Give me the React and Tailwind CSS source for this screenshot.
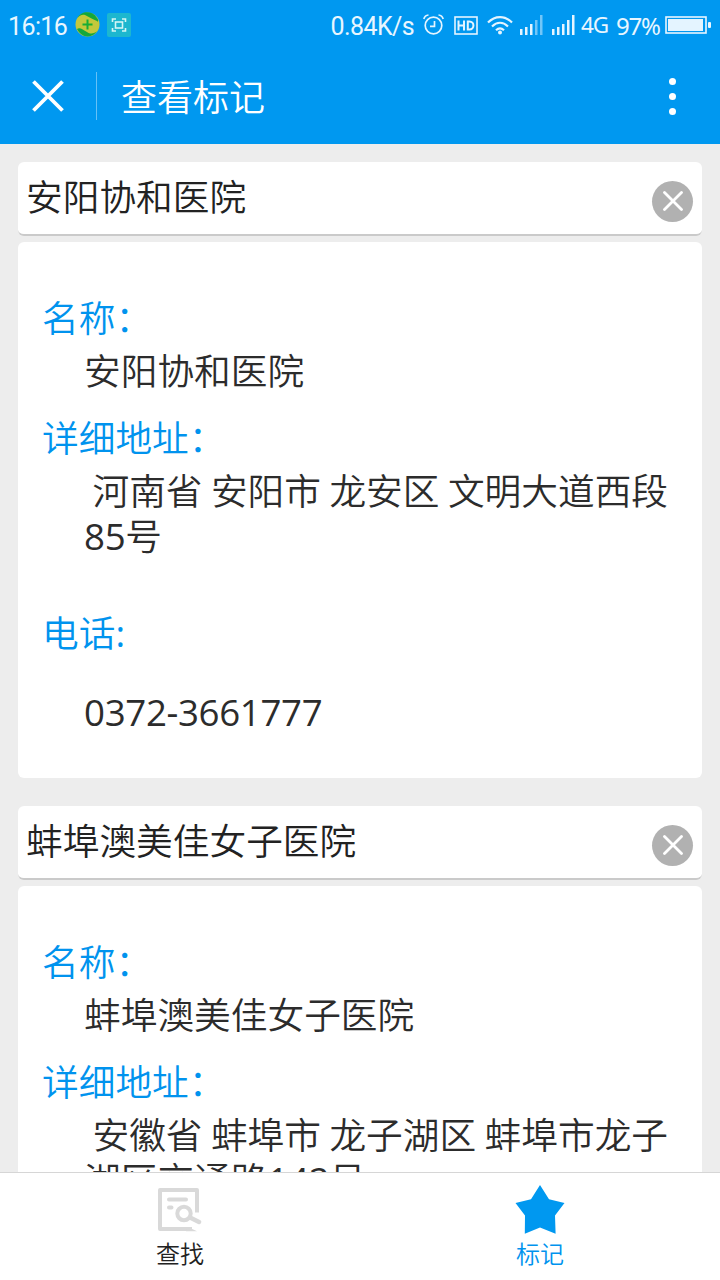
import React from "react";

const hospitals = [
  {
    name: "安阳协和医院",
    address: " 河南省 安阳市 龙安区 文明大道西段85号",
    phone: "0372-3661777",
  },
  {
    name: "蚌埠澳美佳女子医院",
    address: " 安徽省 蚌埠市 龙子湖区 蚌埠市龙子湖区交通路142号",
    phone: "",
  },
];

const Signal = ({ weak, className }) => (
  <svg className={className} width="23" height="20" viewBox="0 0 23 20" fill="#e4f4ff">
    <rect x="0" y="14" width="2.5" height="6" />
    <rect x="5" y="12" width="2.5" height="8" />
    <rect x="10" y="9" width="2.5" height="11" />
    <rect x="15" y="5" width="2.5" height="15" opacity={weak ? 0.5 : 1} />
    <rect x="20" y="0" width="2.5" height="20" opacity={weak ? 0.5 : 1} />
  </svg>
);

const StatusBar = () => (
  <div className="flex h-12 items-center pl-2 pr-[9px] pt-1 font-['Roboto','Noto_Sans',sans-serif] text-[25px] leading-none text-[#e8f6ff]">
    <span className="mt-px w-[67px] whitespace-nowrap text-[25px] tracking-[-0.6px]">16:16</span>
    <svg className="-mt-1 h-[25px] w-[25px]" viewBox="0 0 25 25">
      <circle cx="12.5" cy="12.5" r="12" fill="#c3c83c" />
      <path d="M2.5 6 C6 -1 17 -2 22 6 C24 8 23 11 22 9 C17 7 14 5 10 3 C7 2 4 4 2.5 6Z" fill="#14a83b" />
      <path d="M2 17 C5 15 8 18 12 20 C16 23 20 21 22 19 C18 26 7 27 2 17Z" fill="#14a83b" />
      <path d="M12.5 7.5v10M7.5 12.5h10" stroke="#17ad35" strokeWidth="2" />
    </svg>
    <svg className="-mt-0.5 ml-[7px] h-6 w-6" viewBox="0 0 24 24" fill="none" stroke="#d3f6f5" strokeWidth="1.6">
      <rect width="24" height="24" rx="2" fill="#1cb7cf" stroke="none" />
      <path d="M5.5 9V6h3.5M15 6h3.5v3M18.5 15v3H15M9 18H5.5v-3" />
      <rect x="8.5" y="9" width="7" height="6" />
    </svg>

    <div className="ml-auto flex items-center">
      <span className="mt-px whitespace-nowrap text-[25px] tracking-[-0.6px]">0.84K/s</span>
      <svg className="-mt-1 ml-[9px]" width="21" height="21" viewBox="0 0 21 21" fill="none" stroke="#e4f4ff" strokeWidth="1.7">
        <circle cx="10.5" cy="11.5" r="8.3" />
        <path d="M11.5 7v5.3H7M.8 5C1.5 2.5 3 1.2 5.5 1M20.2 5C19.5 2.5 18 1.2 15.5 1" />
      </svg>
      <svg className="-mt-0.5 ml-[10px]" width="24" height="19" viewBox="0 0 24 19" fill="none" stroke="#e4f4ff">
        <rect x="1" y="1" width="22" height="17" strokeWidth="1.6" />
        <path d="M4.5 4.5v10M10 4.5v10M4.5 9.5H10M13.8 4.5v10M13.8 5.5h1.5c5.5 0 5.5 8 0 8h-1.5" strokeWidth="2" />
      </svg>
      <svg className="-mt-0.5 ml-[9px]" width="26" height="20" viewBox="0 0 26 20" fill="none" stroke="#e4f4ff" strokeWidth="2.2">
        <path d="M1 7.5C8 .2 18 .2 25 7.5M5 11.5c5-4.8 11-4.8 16 0M9 15.3c2.5-2.3 5.5-2.3 8 0" />
        <circle cx="13" cy="17.5" r="2" fill="#e4f4ff" stroke="none" />
      </svg>
      <Signal weak className="-mt-0.5 ml-[7px]" />
      <Signal className="-mt-0.5 ml-[9px]" />
      <span className="-mt-px ml-[6px] w-[27px] whitespace-nowrap font-['Noto_Sans'] text-[22.5px] tracking-[-1px]">4G</span>
      <span className="ml-[8px] w-[43px] whitespace-nowrap font-['Noto_Sans'] text-[24px] tracking-[-1.2px]">97%</span>
      <svg className="-mt-0.5 ml-[6px]" width="46" height="18" viewBox="0 0 46 18" fill="none">
        <rect x="1" y="1" width="40" height="16" stroke="#e8f6ff" strokeWidth="1.6" />
        <rect x="3" y="3" width="35" height="12" fill="#e4f4ff" />
        <rect x="43" y="6" width="3" height="6" rx="1" fill="#e8f6ff" />
      </svg>
    </div>
  </div>
);

const Header = () => (
  <div className="flex h-24 items-center">
    <svg className="ml-8" width="32" height="32" viewBox="0 0 32 32" stroke="#fff" strokeWidth="3.8">
      <path d="M1.5 1.5l29 29M30.5 1.5l-29 29" />
    </svg>
    <div className="ml-8 h-12 w-px bg-[#66c1f7]" />
    <h1 className="ml-6 mt-[3px] text-[36px] font-[350] leading-[46px] text-white">查看标记</h1>
    <div className="ml-auto mr-[44px] flex flex-col gap-2">
      <span className="h-[7px] w-[7px] rounded-full bg-white" />
      <span className="h-[7px] w-[7px] rounded-full bg-white" />
      <span className="h-[7px] w-[7px] rounded-full bg-white" />
    </div>
  </div>
);

// House numbers need a heavier weight than the characters around them
const Address = ({ text }) =>
  text.split(/(\d+)/).map((part, i) =>
    /\d/.test(part) ? (
      <span key={i} className="font-normal tracking-[-0.35px]">{part}</span>
    ) : (
      part
    )
  );

const HospitalCard = ({ hospital }) => (
  <section className="mb-7">
    {/* Title row with remove button */}
    <div className="flex h-[74px] items-center justify-between rounded-md border-b-2 border-[#cacaca] bg-white pl-2 pr-[9px]">
      <h2 className="-mt-0.5 text-[36.7px] font-[350] leading-[46px] text-[#222]">{hospital.name}</h2>
      <button className="mt-1.5 flex h-[41px] w-[41px] items-center justify-center rounded-full bg-[#b1b1b1]">
        <svg width="20" height="20" viewBox="0 0 20 20" stroke="#fff" strokeWidth="2.8" strokeLinecap="round">
          <path d="M1.5 1.5l17 17M18.5 1.5l-17 17" />
        </svg>
      </button>
    </div>

    {/* Details */}
    <dl className="mt-1.5 h-[536px] rounded-md bg-white px-6 pt-[53px] text-[36.7px] font-[350] leading-[46px] text-[#2c2c2c]">
      <dt className="text-[#0093ee]">名称：</dt>
      <dd className="mt-[7px] pl-[42px]">{hospital.name}</dd>
      <dt className="mt-[21px] text-[#0093ee]">详细地址：</dt>
      <dd className="mt-2 whitespace-pre-wrap pl-[42px] leading-[45px] [word-spacing:-1.1px]">
        <Address text={hospital.address} />
      </dd>
      <dt className="mt-[51px] text-[#0093ee]">
        电话<span className="font-normal">:</span>
      </dt>
      <dd className="mt-[33px] pl-[42px] font-normal tracking-[-0.35px]">{hospital.phone}</dd>
    </dl>
  </section>
);

const TabBar = () => (
  <nav className="flex h-[108px] shrink-0 border-t border-[#d6d6d6] bg-white text-[24px] font-[350] leading-[30px]">
    <button className="flex flex-1 flex-col items-center pt-[15px] text-[#222]">
      <svg width="44" height="44" viewBox="0 0 44 44" fill="none" stroke="#d9d9d9">
        <path d="M39 24.5V2H2v39h32" strokeWidth="4" strokeLinejoin="round" />
        <path d="M30 39l9 4.2H28z" fill="#d9d9d9" stroke="none" />
        <path d="M11 11.5h17M11 19.5h2.5" strokeWidth="4" strokeLinecap="round" />
        <circle cx="26" cy="25.5" r="6.7" strokeWidth="4" />
        <path d="M32 29.5l9 4.5" strokeWidth="4.5" strokeLinecap="round" />
      </svg>
      <span className="mt-[7px]">查找</span>
    </button>
    <button className="flex flex-1 flex-col items-center pt-[12px] text-[#0093ee]">
      <svg width="50" height="50" viewBox="0 0 50 50" fill="#0098f0">
        <path d="M25 0l9 14.3 15.5 3.7L40 30.5l.6 18.3L25 42.5 9.8 48.8 10 30.5.5 18 16 14.3z" />
      </svg>
      <span className="mt-[4px]">标记</span>
    </button>
  </nav>
);

const App = () => {
  return (
    <div className="flex h-[1280px] w-[720px] flex-col overflow-hidden bg-[#ededed] font-['Open_Sans','Noto_Sans_CJK_SC',sans-serif]">
      <header className="h-36 shrink-0 bg-[#0098f0]">
        <StatusBar />
        <Header />
      </header>
      <main className="min-h-0 flex-1 overflow-hidden px-[18px] pt-[18px]">
        {hospitals.map((hospital) => (
          <HospitalCard key={hospital.name} hospital={hospital} />
        ))}
      </main>
      <TabBar />
    </div>
  );
};

export default App;
